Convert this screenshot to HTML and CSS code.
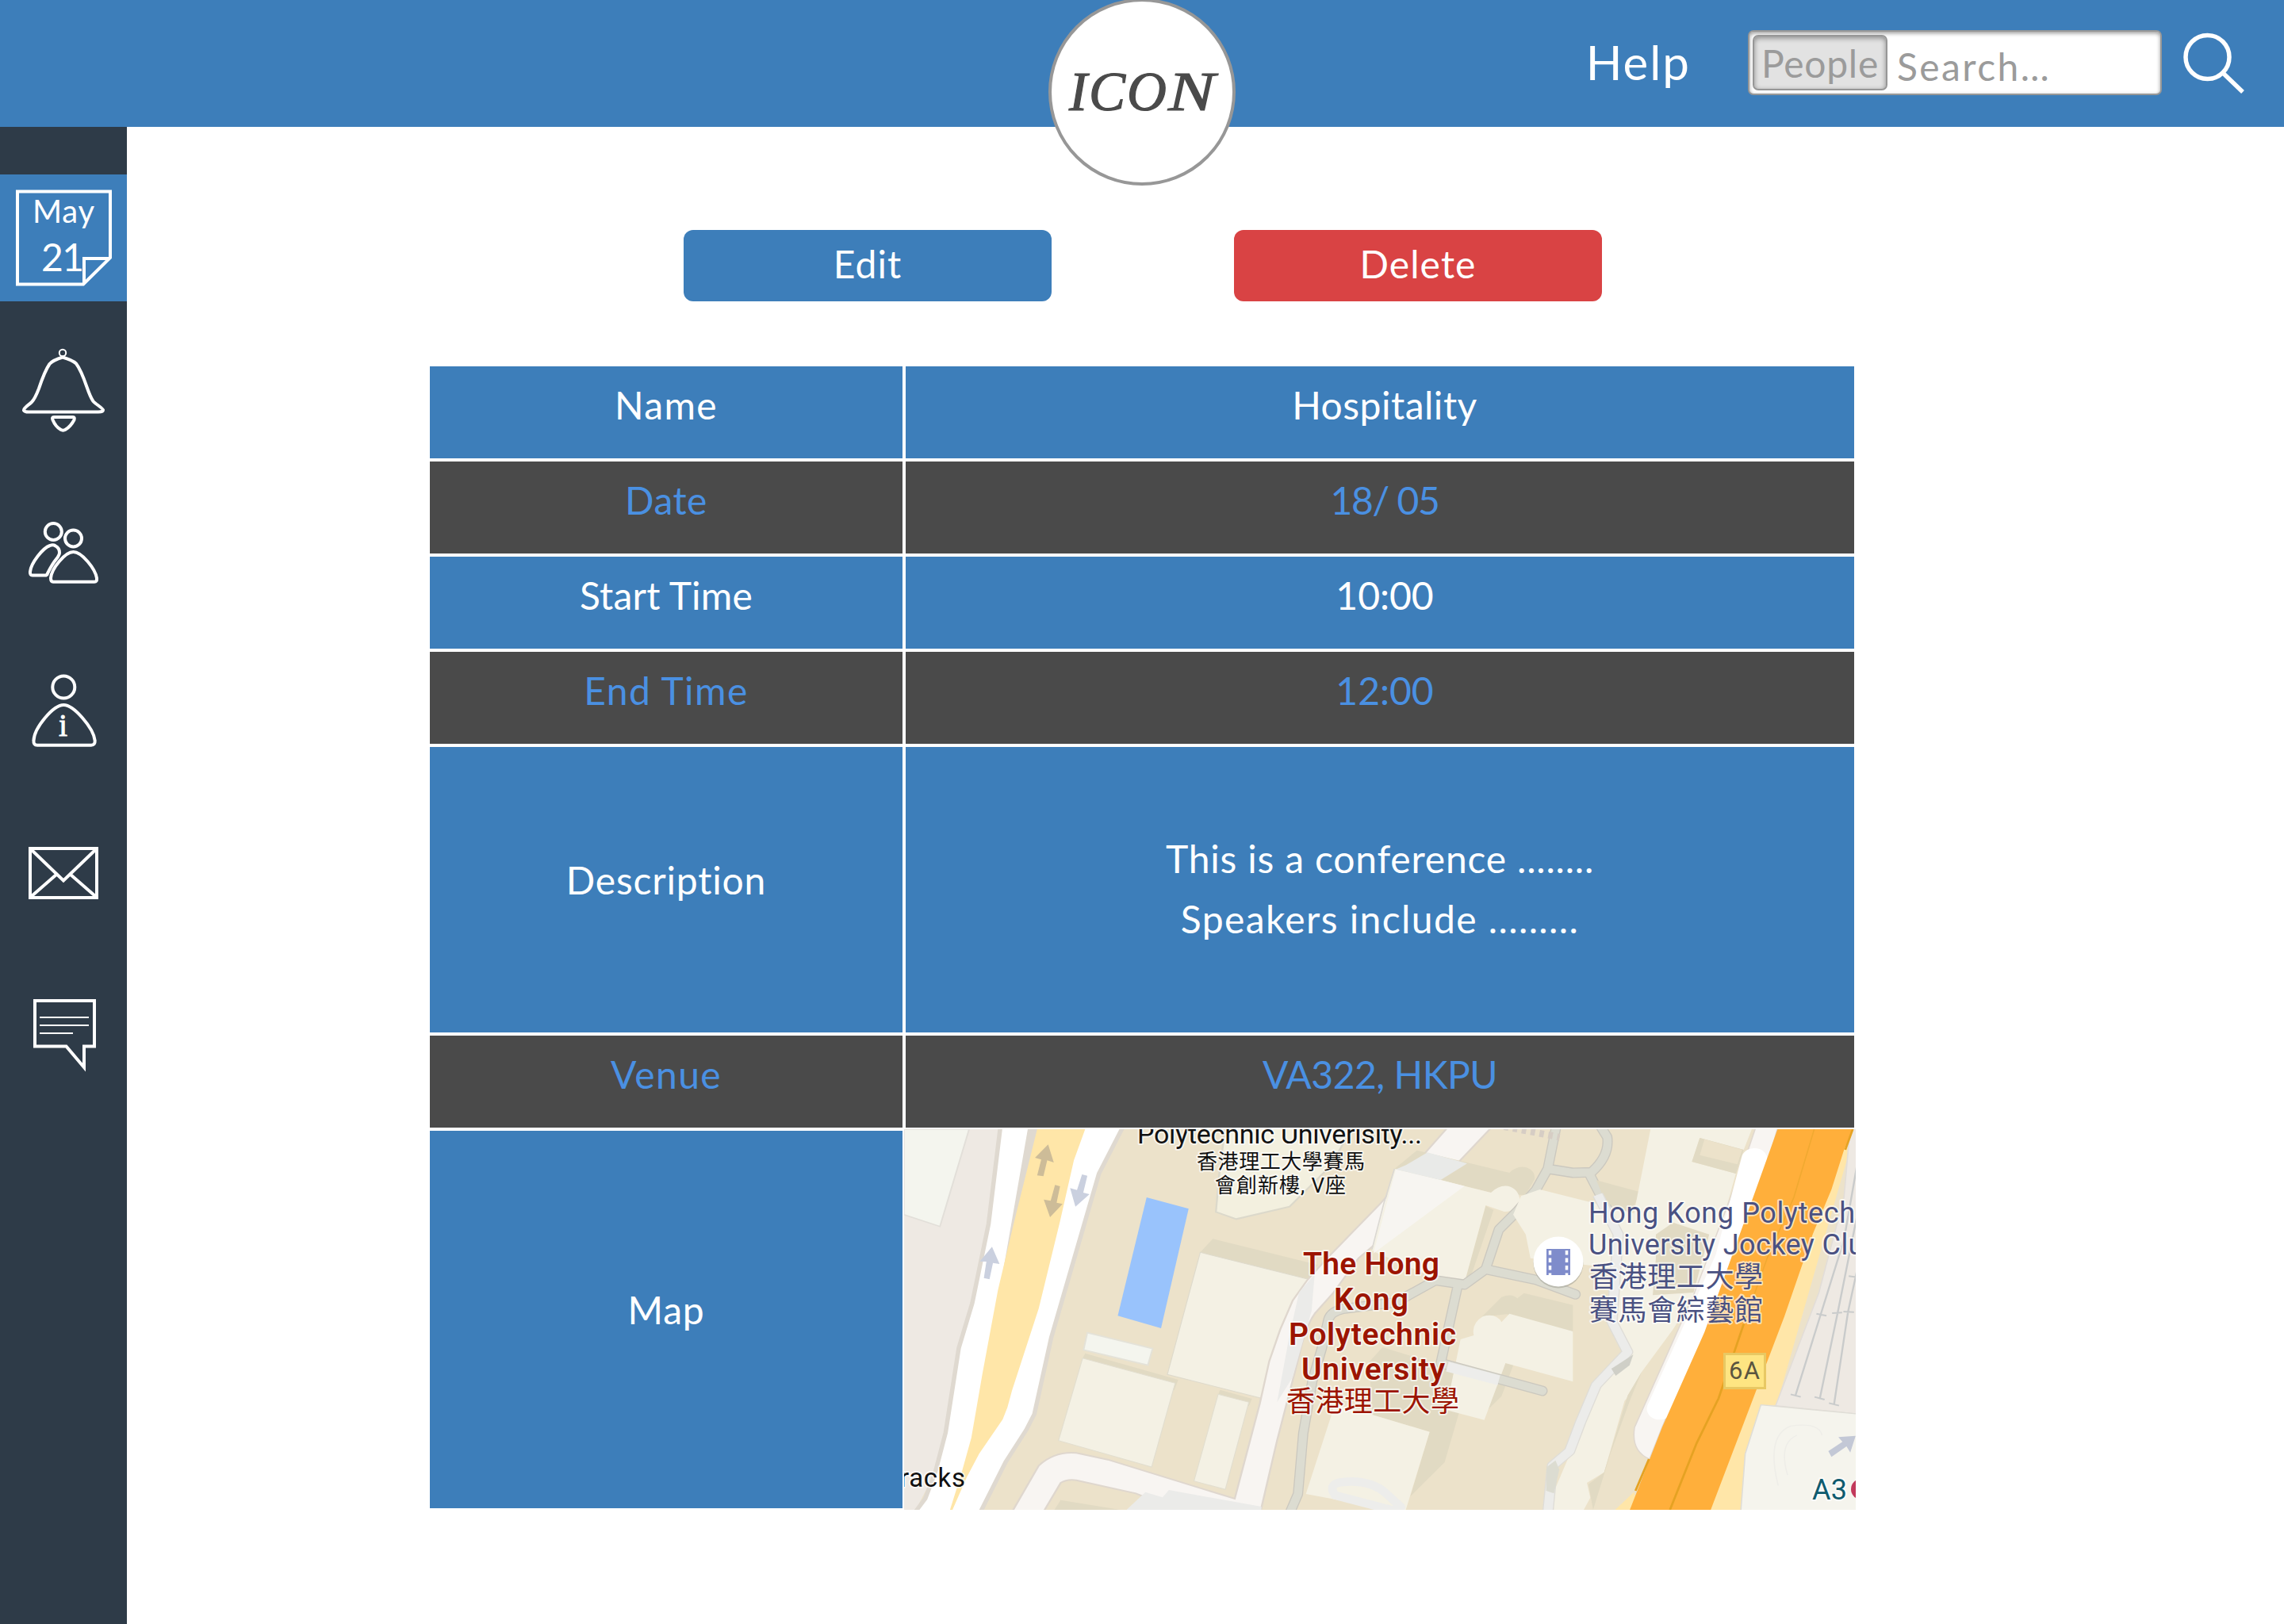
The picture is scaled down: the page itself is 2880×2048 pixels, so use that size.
FILE: index.html
```html
<!DOCTYPE html>
<html lang="en">
<head>
<meta charset="utf-8">
<title>Event details</title>
<link rel="stylesheet" href="styles.css">
</head>
<body>
<header class="topbar">
  <a class="help">Help</a>
  <div class="search">
    <span class="scope">People</span>
    <span class="placeholder">Search…</span>
  </div>
  <svg class="magnifier" viewBox="2750 40 82 80"><circle cx="2783.5" cy="72" r="27.5"/><path d="M2803 92L2828 116"/></svg>
  <div class="logo">ICO<span class="swash">N</span></div>
</header>
<div class="layout">
  <nav class="sidebar">
    <a class="tile active">
      <svg viewBox="0 220 160 160">
        <path d="M22 241.500H139V325L105 358.500H22ZM106 358V326H139"/>
        <text class="cal-month" x="80" y="280.500" textLength="78">May</text>
        <text class="cal-day" x="79" y="342" textLength="54">21</text>
      </svg>
    </a>
    <a class="tile">
      <svg viewBox="0 380 160 200">
        <circle class="thin" cx="79" cy="445" r="4.200"/>
        <path d="M79 450.500Q67 454 62.500 459C57 467 53 478 49 490Q44 503 40 507C36 511 30 514 30 517.500Q31 519.500 36 519.500H124Q130 519.500 130 517C129 514 121 510 117.500 506Q114 501 109.500 488C105 475 101 465 96 458.500Q91 454 79 450.500Z"/>
        <path d="M68 526H92Q94.500 526 93.500 529.500Q89 538 82.500 541.800Q79.500 543.500 76.500 541.800Q70 538 66.500 529.500Q65 526 68 526Z"/>
      </svg>
    </a>
    <a class="tile">
      <svg viewBox="0 580 160 200">
        <circle cx="67.300" cy="670.500" r="10.500"/>
        <circle cx="92.500" cy="679" r="10.500"/>
        <path d="M59 725.500H41Q37.500 725.500 38 721C39 710 54 691 63 688Q67 686.500 70 688.500Q75 691 75 697Q75 700 71 705C66 711 65 713 60 723Q59.500 725.500 57 725.500"/>
        <path d="M67 733.800H119Q122.500 733.800 122 729C120 717 103 696 92.500 696C82 696 65 717 64 729Q64 733.800 67 733.800Z"/>
      </svg>
    </a>
    <a class="tile">
      <svg viewBox="0 780 160 200">
        <circle cx="80.300" cy="866.500" r="14"/>
        <path d="M47 939.700H115Q120 939.700 119.700 934C118 918 93 889 80.300 889C67 889 43 918 42.500 934Q42 939.700 47 939.700Z"/>
        <text class="info-i" x="79.500" y="927.500">i</text>
      </svg>
    </a>
    <a class="tile">
      <svg viewBox="0 980 160 240">
        <path d="M38 1070H122V1132H38ZM40 1072L80 1110.500L120 1072M71.500 1102.500L40 1130M88.500 1102.500L120 1130"/>
      </svg>
    </a>
    <a class="tile">
      <svg viewBox="0 1220 160 200">
        <path d="M44 1262H119V1319.500H106V1346L83.500 1319.500H44Z"/>
        <path class="thin" d="M50 1283H112M50 1293H112M50 1303H92"/>
      </svg>
    </a>
  </nav>
  <main class="content">
    <div class="actions">
      <button class="btn edit">Edit</button>
      <button class="btn delete">Delete</button>
    </div>
    <div class="details">
      <div class="cell"><span class="wide">Name</span></div>
      <div class="cell value"><span class="snug">Hospitality</span></div>
      <div class="cell dark"><span class="snug">Date</span></div>
      <div class="cell dark value"><span class="tight">18/ 05</span></div>
      <div class="cell"><span class="close">Start Time</span></div>
      <div class="cell value"><span>10:00</span></div>
      <div class="cell dark"><span class="wide">End Time</span></div>
      <div class="cell dark value"><span>12:00</span></div>
      <div class="cell tall-label"><span class="loose">Description</span></div>
      <div class="cell desc"><span class="loose">This is a conference ........</span><span class="wide">Speakers include .........</span></div>
      <div class="cell dark"><span class="wide">Venue</span></div>
      <div class="cell dark"><span class="narrow">VA322, HKPU</span></div>
      <div class="cell map-label"><span class="loose">Map</span></div>
      <svg class="map" viewBox="0 0 1200 480">
        <rect width="1200" height="480" fill="#ece2ca"/>
        <g transform="translate(-20 -24) scale(.39541 .33333)">
          <path fill="#eee9e3" d="M50 72H400L265 740L150 1370L88 1512H50Z"/>
          <path fill="#f4f5ee" stroke="#e2dfd9" stroke-width="5" d="M50 72H258L165 440L50 395Z"/>
          <path fill="#fff" stroke="#dfd9d0" stroke-width="14" d="M358 60L320 430L268 730L225 900L183 1220L150 1370L118 1470L80 1530H290L375 1330L440 1210L466 1150L520 860L672 240L750 60Z"/>
          <path fill="#dfd9d0" d="M445 72H480L350 720Z"/>
          <path fill="#ffe6a8" d="M475 72H628L592 190L548 420L480 750L395 1060L380 1125L365 1170L290 1300L250 1390L205 1512H197L232 1380L265 1240L300 1000L350 680L400 430Z"/>
          <path fill="#cdbc98" d="M510 130L528 198L507 190L495 250L475 247L488 187L468 180ZM532 283L548 288L537 350L556 355L516 405L496 338L518 343Z"/>
          <path fill="#cad0df" d="M618 243L635 248L622 312L642 318L597 365L580 295L602 302ZM331 517L355 582L334 578L323 640L305 635L313 573L292 572Z"/>
          <path fill="#99c3fc" d="M824 330L958 373L870 825L732 778Z"/>
          <path fill="#f3f0df" stroke="#dcd9cb" stroke-width="6" d="M1075 60H1480L1440 150L1390 235L1280 365L1110 412L1045 385L1055 250Z"/>
          <path fill="#e1dac3" d="M995 538L1035 487L1370 585L1340 645Z"/>
          <path fill="#f4f1e4" stroke="#dedacc" stroke-width="3" d="M995 538L1340 640L1290 720L1240 1105L890 1000Z"/>
          <path fill="#f4f5ee" stroke="#e4e2d8" stroke-width="5" d="M635 842L843 902L828 965L623 907Z"/>
          <path fill="#e1dac3" d="M620 938L628 920L925 1020L912 1060ZM1052 1078L1058 1058L1160 1092L1150 1120Z"/>
          <path fill="#f4f1e4" stroke="#e2decf" stroke-width="3" d="M620 938L915 1033L840 1350L543 1250ZM1052 1075L1150 1105L1075 1435L975 1403Z"/>
          <path fill="#e1dac3" d="M530 1512L550 1475L740 1512Z"/>
          <path fill="#f8f5f2" stroke="#dfd7ce" stroke-width="6" d="M1788 60L1568 355L1400 560L1335 645L1290 720L1250 830L1215 950L1185 1110L1105 1470L700 1322L600 1297Q530 1290 480 1345L390 1530H490L550 1410Q570 1395 600 1400L790 1450L960 1530H1185L1240 1250L1310 930Q1330 820 1360 770L1420 690L1500 560L1640 420L1928 60Z"/>
          <path fill="#ebebe9" d="M760 1512L820 1445L875 1465L895 1437L1190 1500V1512ZM1310 690L1360 620L1350 760L1290 1010L1240 1105L1280 850Z"/>
        </g>
        <g transform="translate(420 0) scale(.33333)">
          <path fill="#e1dac3" d="M595 150L680 80L1030 165Q1060 135 1095 145Q1130 160 1125 190L1090 250L960 240ZM940 290L970 305L890 540L860 580ZM925 710L1000 635Q1040 620 1060 640L1085 620L1270 665V770L1020 700ZM500 880L550 825L860 920L840 1070L785 1260L655 1390L728 1145L510 1080ZM1015 885L1045 892L1000 1010L950 1060Z"/>
          <path fill="#f4f1e4" d="M595 150L960 240Q990 210 1025 215Q1065 225 1070 270Q1050 315 1010 312L940 288L860 580L740 560L510 460Z"/>
          <path fill="#f7f5f1" d="M600 152L770 192L860 215L515 470Z"/>
          <path fill="none" stroke="#dbd8d2" stroke-width="5" d="M595 150L555 280L510 455"/>
          <path fill="#e9eae8" d="M720 88L870 130L770 192L600 152L640 135Z"/>
          <path fill="#f4f1e4" d="M845 795L895 780Q885 735 930 708Q980 695 1000 730L1030 698L1270 765V955L1015 885L935 1100L790 1062ZM370 1040L510 1080L728 1145L635 1450L260 1380Z"/>
        </g>
        <g transform="translate(420 0) scale(.33333)" fill="none" stroke-linecap="round" stroke-linejoin="round">
          <path stroke="#cbc8bf" stroke-width="39" d="M200 1450L230 1380L250 1150L285 950L320 830L345 720Q355 690 400 680L600 655L750 572L860 588L940 530L990 380L1060 310L1130 230L1175 150L1205 0M940 530L1130 570L1280 625M835 590L770 885L1155 990M1175 150L1270 165L1340 163Q1410 100 1400 30L1375 -10M1330 165L1400 300"/>
          <path stroke="#dcdcd1" stroke-width="31" d="M200 1450L230 1380L250 1150L285 950L320 830L345 720Q355 690 400 680L600 655L750 572L860 588L940 530L990 380L1060 310L1130 230L1175 150L1205 0M940 530L1130 570L1280 625M835 590L770 885L1155 990M1175 150L1270 165L1340 163Q1410 100 1400 30L1375 -10M1330 165L1400 300"/>
          <path stroke="#ededeb" stroke-width="38" stroke-linecap="butt" d="M795 898L990 950"/>
          <path stroke="#ededeb" stroke-width="32" d="M620 1450L370 1385Q340 1340 400 1335Q500 1325 560 1375L620 1430"/>
          <path stroke="#d6cdc4" stroke-width="26" stroke-linecap="butt" stroke-dasharray="17 17" d="M1010 -10L1220 30"/>
        </g>
        <g transform="translate(600 -24) scale(.39541 .33333)">
          <path fill="#e1dac3" d="M690 265L830 310L800 390L720 350ZM860 480L930 430L1060 470L1000 700L850 690ZM830 800L880 740L870 900Z"/>
          <path fill="#f4f1e4" d="M865 60H1190L1160 150L1020 105L995 195L1135 240L1060 560L1000 700L850 1000L780 1100L715 1370L650 1512H530L610 1290L700 1000L790 920L740 800L760 600L480 560L465 470L425 395L450 325L510 300L810 390Z"/>
          <path fill="#e1dac3" d="M880 470L935 425L1050 470L1000 690L870 700L880 560ZM1020 105L995 195L1135 240L1160 150Z"/>
          <path fill="#ece2ca" d="M1035 110L1155 150L1140 205L1020 170ZM835 990L990 740L810 1210L800 1260L860 1320L800 1450L730 1512H680L660 1410L715 1370L790 1080Z"/>
          <path fill="#e1dac3" d="M835 990L790 1080L715 1370L665 1415L680 1512L735 1300L800 1090Z"/>
          <g fill="none" stroke-linejoin="round">
            <path stroke="#dfddd7" stroke-width="36" d="M695 320L760 470L740 800L790 915L690 1040L640 1180L605 1290L550 1345L535 1530"/>
            <path stroke="#ececea" stroke-width="29" d="M695 320L760 470L740 800L790 915L690 1040L640 1180L605 1290L550 1345L535 1530"/>
          </g>
          <path fill="#cfcfc7" d="M808 925L796 965L752 1005L738 978Z"/>
          <path fill="#dcdcd1" d="M532 1350L560 1325L572 1360L555 1450L530 1440Z"/>
          <path fill="#f8f5f2" stroke="#e0d8d0" stroke-width="4" d="M1200 60H1270L1190 400L900 1200L860 1320Q800 1290 812 1200L1000 700L1160 200Z"/>
          <path fill="none" stroke="#fff" stroke-width="82" stroke-linecap="round" stroke-linejoin="round" d="M1194 185L1110 560L892 1130"/>
          <path fill="#ffe6a8" d="M1480 72H1517L1265 1115L1215 1115L1165 1300L1150 1512H1050ZM750 1512L810 1445L830 1512Z"/>
          <path fill="#eee9e3" stroke="#e2ddd8" stroke-width="4" d="M1500 60H1530V1150L1262 1118L1400 690L1480 330Z"/>
          <path fill="#ffaf3b" d="M1268 72H1508L1480 150L1440 300L1380 470L1290 780L1055 1512H797L900 1200L1035 840L1190 330Z"/>
          <path fill="none" stroke="#f0a931" stroke-width="4" d="M1385 72L1320 330L1235 560L1160 810"/>
          <path fill="none" stroke="#e5a223" stroke-width="7" d="M1160 810L1080 1090L1010 1260L925 1512M1508 72L1484 150M858 1320L815 1440"/>
          <path fill="none" stroke="#c9cbcb" stroke-width="6" d="M1530 150L1480 490L1325 1080M1310 1075L1342 1085M1530 350L1460 765L1403 1090M1386 1085L1418 1095M1530 560L1493 762L1448 1115M1432 1108L1464 1118M1392 770L1424 778M1442 768L1474 766M1478 762L1512 764M1495 628L1520 632"/>
          <path fill="#f5f4ed" stroke="#dfddd6" stroke-width="4" d="M1215 1115L1530 1150V1530H1150L1165 1300Z"/>
          <path fill="none" stroke="#eeede8" stroke-width="4" d="M1270 1420Q1230 1230 1310 1195Q1400 1180 1410 1230M1300 1380Q1270 1260 1330 1230"/>
          <path fill="#c3c8d6" d="M1430 1290L1475 1255L1462 1237L1517 1232L1500 1295L1488 1272L1440 1312Z"/>
        </g>
        <circle cx="825" cy="169" r="31.500" fill="#9a9a90" opacity=".5"/>
        <circle cx="825" cy="167" r="31.500" fill="#fff"/>
        <path fill="#7f8ccb" d="M810 151h30v33h-30z"/>
        <path fill="none" stroke="#fff" stroke-width="3.500" stroke-dasharray="5.500 4" d="M814.500 153v31M835.500 153v31"/>
        <rect x="1034.500" y="283.500" width="51" height="43" fill="#fee582" stroke="#e8c863" stroke-width="3"/>
        <circle cx="1207" cy="454" r="13" fill="#c2395b"/>
        <g class="place">
          <text x="294" y="18" textLength="359" font-size="34">Polytechnic Univerisity...</text>
          <text x="369" y="50" textLength="212" font-size="26">香港理工大學賽馬</text>
          <text x="392" y="80" textLength="165" font-size="26">會創新樓, V座</text>
          <text x="-5" y="451" textLength="82" font-size="33">racks</text>
        </g>
        <g class="campus">
          <text x="503" y="183" textLength="172">The Hong</text>
          <text x="542" y="228" textLength="94">Kong</text>
          <text x="485" y="272" textLength="211">Polytechnic</text>
          <text x="501" y="316" textLength="181">University</text>
          <text class="cjk" x="482" y="356" textLength="218">香港理工大學</text>
        </g>
        <g class="venue">
          <text x="863" y="118" textLength="336">Hong Kong Polytech</text>
          <text x="863" y="158" textLength="368">University Jockey Club</text>
          <text x="864" y="199" textLength="219">香港理工大學</text>
          <text x="864" y="241" textLength="219">賽馬會綜藝館</text>
        </g>
        <text class="route" x="1040" y="315" textLength="39">6A</text>
        <text class="exit" x="1145" y="467" textLength="44">A3</text>
      </svg>
    </div>
  </main>
</div>
</body>
</html>
```
FILE: styles.css
```css
* { box-sizing: border-box; }

body {
  margin: 0;
  width: 2880px;
  height: 2048px;
  overflow: hidden;
  background: #fff;
  color: #fff;
  font-family: Lato, "Open Sans", sans-serif;
  font-size: 48px;
  font-variant-ligatures: none;
  display: flex;
  flex-direction: column;
}

.topbar {
  position: relative;
  height: 160px;
  flex: none;
  background: #3d7eba;
  display: flex;
  justify-content: flex-end;
  align-items: center;
  padding-right: 48px;
}

.help {
  font-size: 60px;
  line-height: 72px;
  letter-spacing: 2px;
  margin-right: 72px;
  padding-bottom: 4px;
}

.search {
  width: 522px;
  height: 82px;
  margin-right: 24px;
  margin-bottom: 2px;
  padding: 4px;
  display: flex;
  background: #fff;
  border: 2px solid #979797;
  border-radius: 7px;
  box-shadow: inset 0 2px 5px rgba(0, 0, 0, .4);
  color: #9b9b9b;
}

.scope {
  width: 170px;
  height: 70px;
  border: 2px solid #979797;
  border-radius: 7px;
  background: #e2e2e2;
  box-shadow: inset 0 2px 6px rgba(0, 0, 0, .4);
  line-height: 68px;
  letter-spacing: .7px;
  text-align: center;
}

.placeholder {
  line-height: 79px;
  letter-spacing: 2.4px;
  margin-left: 12px;
}

.magnifier {
  width: 82px;
  height: 80px;
  fill: none;
  stroke: #fff;
  stroke-width: 5.5;
}

.logo {
  position: absolute;
  left: 1322px;
  top: -2px;
  width: 236px;
  height: 236px;
  border: 4px solid #979797;
  border-radius: 50%;
  background: #fff;
  color: #4a4a4a;
  font: italic 69px/229px "Liberation Serif", serif;
  letter-spacing: 2px;
  padding-left: 22px;
  -webkit-text-stroke: 1.2px #4a4a4a;
}

.swash {
  display: inline-block;
  letter-spacing: 0;
  transform: scaleX(1.28);
  transform-origin: left;
}

.layout {
  flex: 1;
  display: flex;
}

.sidebar {
  width: 160px;
  padding-top: 60px;
  background: #2e3b48;
  display: flex;
  flex-direction: column;
}

.tile svg {
  display: block;
  width: 160px;
  fill: none;
  stroke: #fff;
  stroke-width: 4;
}

.tile.active { background: #3d7eba; }
.tile .thin { stroke-width: 2; }

.tile text {
  fill: #fff;
  stroke: none;
  text-anchor: middle;
}

.cal-month { font-size: 40px; }
.cal-day { font-size: 48px; }
.tile .info-i {
  font: 40px "Liberation Serif", serif;
  stroke: #fff;
  stroke-width: .8;
}

.content { flex: 1; }

.actions {
  display: flex;
  gap: 230px;
  padding: 130px 0 0 702px;
}

.btn {
  width: 464px;
  height: 90px;
  padding: 0 0 5px;
  border: 0;
  border-radius: 12px;
  background: #3d7eba;
  color: #fff;
  font: inherit;
  letter-spacing: 1.1px;
}

.btn.delete { background: #d94344; }

.details {
  width: 1796px;
  margin: 82px 0 0 382px;
  display: grid;
  grid-template-columns: 596px 1196px;
  grid-template-rows: repeat(4, 116px) 360px 116px 476px;
  gap: 4px;
}

.cell {
  background: #3d7eba;
  display: flex;
  flex-direction: column;
  align-items: center;
  justify-content: center;
  line-height: 76px;
  padding-bottom: 19px;
}

.cell.dark {
  background: #4a4a4a;
  color: #4a90e2;
}

.cell.value { padding-left: 12px; }
.cell.tall-label { padding-bottom: 25px; }
.cell.desc { padding-bottom: 3px; }
.cell.map-label { padding-bottom: 25px; }

.wide { letter-spacing: 1.4px; }
.loose { letter-spacing: .8px; }
.snug { letter-spacing: .5px; }
.close { letter-spacing: .2px; }
.narrow { letter-spacing: -.5px; }
.tight { letter-spacing: -1.4px; }

.map {
  width: 1200px;
  height: 480px;
  margin: -2px 0 0 -2px;
  font-family: Roboto, "Noto Sans CJK TC", sans-serif;
}

.map text {
  paint-order: stroke;
  stroke: rgba(255, 255, 255, .65);
  stroke-width: 4px;
  stroke-linejoin: round;
}

.place { fill: #111; }
.campus { fill: #9c1400; font-size: 39px; font-weight: 600; }
.campus .cjk { font-size: 36px; font-weight: 400; }
.venue { fill: #4a5182; font-size: 36px; }
.map .route { fill: #5a5540; font-size: 31px; stroke: none; }
.map .exit { fill: #0f5b6e; font-size: 36px; }
```
